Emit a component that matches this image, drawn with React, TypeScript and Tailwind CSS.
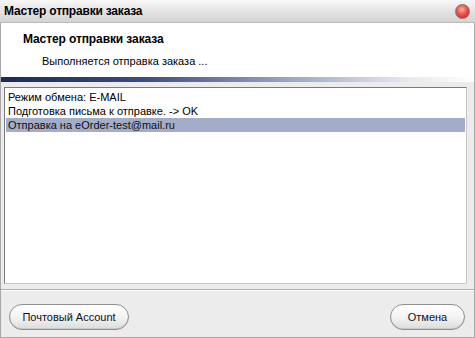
import React from "react";

const font = { fontFamily: '"Liberation Sans", Arial, sans-serif' };

function CloseButton() {
  return (
    <div className="w-[15px] h-[15px] rounded-full border border-[#9a6a6a] bg-[radial-gradient(circle_at_45%_35%,#ffb0a8_0%,#e8544a_45%,#b3231c_100%)]" />
  );
}

function PillButton({ label, className }: { label: string; className?: string }) {
  return (
    <button
      className={`h-[26px] rounded-[13px] border border-[#8f8f8f] bg-[linear-gradient(#ffffff,#f4f4f4_50%,#dcdcdc)] text-[11px] text-[#111] shadow-[inset_0_-1px_0_#c8c8c8] ${className ?? ""}`}
    >
      {label}
    </button>
  );
}

export default function App() {
  const lines = [
    "Режим обмена: E-MAIL",
    "Подготовка письма к отправке. -> OK",
  ];
  return (
    <div className="w-[475px] h-[338px] bg-[#ececec] flex flex-col overflow-hidden" style={font}>
      {/* Title bar */}
      <div className="h-[23px] flex items-center justify-between pl-[4px] pr-[5px] border-b border-[#b9b9b9] bg-[linear-gradient(#f7f7f7,#e2e2e2_55%,#d4d4d4)]">
        <span className="text-[12px] font-bold text-black tracking-[-0.2px]">Мастер отправки заказа</span>
        <CloseButton />
      </div>
      <div className="flex-1 flex flex-col border-x border-b border-[#a8a8a8]">
        {/* Header */}
        <div className="bg-white h-[52px] flex flex-col pt-[9px] pl-[22px]">
          <span className="text-[12px] font-bold text-black leading-[14px] tracking-[-0.1px]">Мастер отправки заказа</span>
          <span className="text-[11px] text-black leading-[14px] mt-[8px] pl-[19px]">Выполняется отправка заказа ...</span>
        </div>
        <div className="bg-white h-[2px]" />
        <div className="h-[5px] bg-[linear-gradient(90deg,#1b2b5a,#3b4c7e_30%,#9aa3bf_60%,#e4e6ee_85%,#ffffff)]" />
        {/* Log list */}
        <div className="pt-[5px] pl-[3px] pr-[7px]">
          <div className="h-[197px] bg-white border border-[#7a7a7a] border-r-[#c8c8c8] border-b-[#c8c8c8] pt-[2px] pl-[1px] pr-[1px]">
            {lines.map((l) => (
              <div key={l} className="h-[14px] leading-[14px] text-[11px] pl-[2px] text-black">{l}</div>
            ))}
            <div className="h-[14px] leading-[14px] text-[11px] pl-[2px] text-[#111] bg-[#a3adc8]">Отправка на eOrder-test@mail.ru</div>
          </div>
        </div>
        <div className="mt-[5px] border-t border-[#b0b0b0] h-px" />
        {/* Footer */}
        <div className="flex-1 flex items-center justify-between pl-[8px] pr-[9px] border-t border-white">
          <PillButton label="Почтовый Account" className="w-[120px] mt-[6px]" />
          <PillButton label="Отмена" className="w-[75px] mt-[6px]" />
        </div>
      </div>
    </div>
  );
}
